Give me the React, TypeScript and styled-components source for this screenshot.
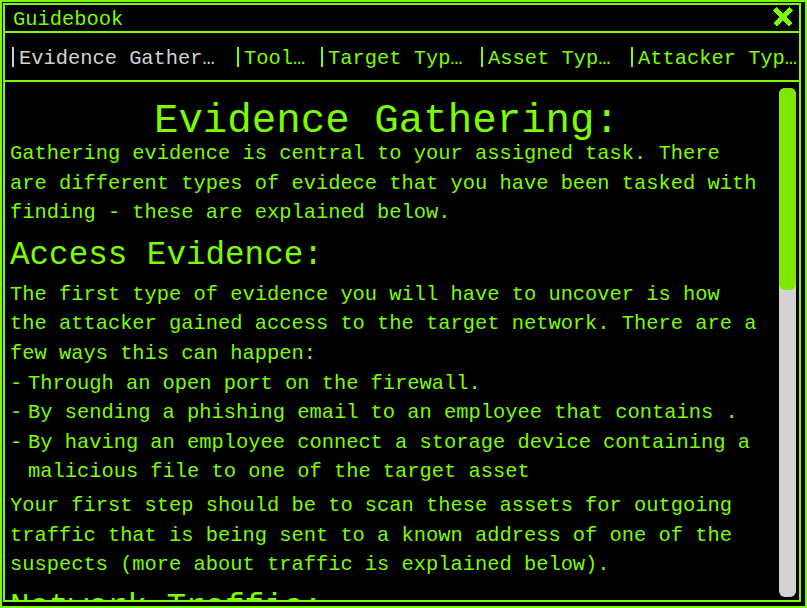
import React from 'react';
import styled, { createGlobalStyle } from 'styled-components';

const green = '#7cfc00';

const GlobalStyle = createGlobalStyle`
  html, body {
    margin: 0;
    background: #000;
  }
  body {
    font-family: 'Liberation Mono', 'DejaVu Sans Mono', monospace;
  }
`;

const Window = styled.div`
  width: 807px;
  height: 608px;
  box-sizing: border-box;
  border: 2px solid ${green};
  padding: 1px 4px 4px 1px;
  background: #000;
`;

const Panel = styled.div`
  height: 100%;
  box-sizing: border-box;
  border: 2px solid ${green};
  display: flex;
  flex-direction: column;
  color: ${green};
`;

const TitleBar = styled.div`
  flex-shrink: 0;
  height: 26px;
  display: flex;
  align-items: flex-start;
  justify-content: space-between;
  padding: 0 6px 0 8px;
  border-bottom: 2px solid ${green};
`;

const TitleText = styled.span`
  font-size: 20.4px;
  line-height: 22px;
  padding-top: 4px;
`;

const CloseButton = styled.button`
  margin-top: 2px;
  padding: 0;
  border: none;
  background: none;
  width: 20px;
  height: 20px;
  cursor: pointer;
  display: block;
`;

const TabBar = styled.div`
  flex-shrink: 0;
  height: 47px;
  display: flex;
  align-items: center;
  padding-left: 7px;
  border-bottom: 2px solid ${green};
`;

const Tab = styled.div<{ $width?: number; $active?: boolean }>`
  ${(p) => (p.$width ? `width: ${p.$width}px; flex-shrink: 0;` : 'flex: 1; min-width: 0;')}
  box-sizing: border-box;
  height: 20px;
  padding-left: 5px;
  border-left: 2px solid currentColor;
  color: ${(p) => (p.$active ? '#d2d2d2' : green)};
  font-size: 20.4px;
  line-height: 24px;
  white-space: nowrap;
  cursor: pointer;
`;

const Body = styled.div`
  flex: 1;
  min-height: 0;
  display: flex;
`;

const Content = styled.div`
  flex: 1;
  min-width: 0;
  overflow: hidden;
  padding: 21px 16px 0 5px;
  font-size: 20.4px;
  line-height: 29.6px;
`;

const ScrollTrack = styled.div`
  flex: 0 0 17px;
  margin: 6px 3px 3px 0;
  background: #d3d3d3;
  border-radius: 6px;
`;

const ScrollThumb = styled.div<{ $height: number }>`
  height: ${(p) => p.$height}px;
  background: #80e800;
  border-radius: 6px;
`;

const Title = styled.h1`
  margin: 0;
  font-size: 40.8px;
  line-height: 36px;
  font-weight: normal;
  text-align: center;
`;

const Heading = styled.h2`
  margin: 0;
  font-size: 32.6px;
  line-height: 48px;
  font-weight: normal;
`;

const Paragraph = styled.p`
  margin: 0 0 4px;
`;

const Bullet = styled.span`
  display: flex;
`;

const Dash = styled.span`
  flex: 0 0 18px;
`;

const tabs = [
  { label: 'Evidence Gather…', width: 225 },
  { label: 'Tool…', width: 84 },
  { label: 'Target Typ…', width: 160 },
  { label: 'Asset Typ…', width: 150 },
  { label: 'Attacker Typ…' },
];

const CloseIcon = () => (
  <svg width="20" height="20" viewBox="0 0 20 20" shapeRendering="crispEdges">
    <path d="M2 2 L18 18 M18 2 L2 18" stroke={green} strokeWidth="5" />
  </svg>
);

const App = () => {
  return (
    <>
      <GlobalStyle />
      <Window>
        <Panel>
          <TitleBar>
            <TitleText>Guidebook</TitleText>
            <CloseButton aria-label="Close">
              <CloseIcon />
            </CloseButton>
          </TitleBar>
          <TabBar>
            {tabs.map((t, i) => (
              <Tab key={t.label} $width={t.width} $active={i === 0}>
                {t.label}
              </Tab>
            ))}
          </TabBar>
          <Body>
            <Content>
              <Title>Evidence Gathering:</Title>
              <Paragraph>
                Gathering evidence is central to your assigned task. There are
                different types of evidece that you have been tasked with
                finding - these are explained below.
              </Paragraph>
              <Heading>Access Evidence:</Heading>
              <Paragraph>
                The first type of evidence you will have to uncover is how the
                attacker gained access to the target network. There are a few
                ways this can happen:
                <Bullet>
                  <Dash>-</Dash>
                  <span>Through an open port on the firewall.</span>
                </Bullet>
                <Bullet>
                  <Dash>-</Dash>
                  <span>By sending a phishing email to an employee that contains .</span>
                </Bullet>
                <Bullet>
                  <Dash>-</Dash>
                  <span>
                    By having an employee connect a storage device containing a
                    malicious file to one of the target asset
                  </span>
                </Bullet>
              </Paragraph>
              <Paragraph>
                Your first step should be to scan these assets for outgoing
                traffic that is being sent to a known address of one of the
                suspects (more about traffic is explained below).
              </Paragraph>
              <Heading>Network Traffic:</Heading>
              <Paragraph>
                Every asset on the network sends and receives traffic. Each
                packet has a source, a destination and a size. A large amount of
                traffic going to the address of a suspect is strong evidence
                that the asset has been compromised.
              </Paragraph>
            </Content>
            <ScrollTrack>
              <ScrollThumb $height={202} />
            </ScrollTrack>
          </Body>
        </Panel>
      </Window>
    </>
  );
};

export default App;
